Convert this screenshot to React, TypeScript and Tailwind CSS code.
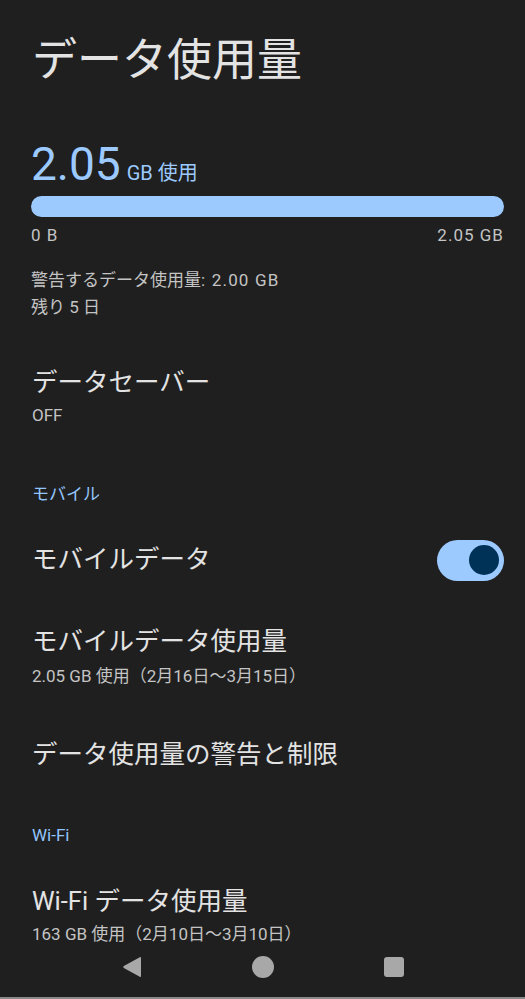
import React from 'react';

const font = { fontFamily: 'Roboto, "Noto Sans CJK JP", sans-serif' };

function SectionHeader({ label }: { label: string }) {
	return <div className="px-[32px] text-[17px] text-[#93c5fd] leading-none">{label}</div>;
}

function Item({ title, summary, gap = 'mt-[14px]' }: { title: string; summary?: string; gap?: string }) {
	return (
		<div className="px-[32px]">
			<div className="text-[25.5px] leading-none text-[#e3e3e3]">{title}</div>
			{summary && <div className={`${gap} text-[17px] leading-none text-[#c4c4c4]`}>{summary}</div>}
		</div>
	);
}

export default function App() {
	return (
		<div className="fixed inset-0 overflow-hidden bg-[#1f1f1f]" style={font}>
			<div className="pt-[38px]">
				<h1 className="px-[32px] text-[45px] leading-none text-[#e3e3e3]">データ使用量</h1>

				{/* usage summary */}
				<div className="mt-[58px] pl-[31px] pr-[21px]">
					<div className="flex items-baseline text-[#9ccaff]">
						<span className="text-[46px] leading-none">2.05</span>
						<span className="ml-[6px] text-[20px] leading-none">GB 使用</span>
					</div>
					<div className="mt-[9px] h-[21px] w-full rounded-full bg-[#9ccaff]" />
					<div className="mt-[10px] flex justify-between text-[17px] leading-none text-[#c4c4c4] tracking-[0.06em]">
						<span>0 B</span>
						<span>2.05 GB</span>
					</div>
					<div className="mt-[23px] text-[17px] leading-[27px] text-[#c4c4c4]">
						<div>
							警告するデータ使用量<span className="tracking-[0.07em]">: 2.00 GB</span>
						</div>
						<div>残り 5 日</div>
					</div>
				</div>

				<div className="mt-[49px]">
					<Item title="データセーバー" summary="OFF" gap="mt-[11px]" />
				</div>

				<div className="mt-[62px]">
					<SectionHeader label="モバイル" />
				</div>

				<div className="mt-[37px] flex items-center justify-between pl-[32px] pr-[21px]">
					<div className="text-[25.5px] leading-none text-[#e3e3e3]">モバイルデータ</div>
					<div className="flex h-[41px] w-[67px] items-center justify-end rounded-full bg-[#9ccaff] pr-[5px]">
						<div className="h-[30px] w-[30px] rounded-full bg-[#003258]" />
					</div>
				</div>

				<div className="mt-[48px]">
					<Item title="モバイルデータ使用量" summary="2.05 GB 使用（2月16日〜3月15日）" />
				</div>

				<div className="mt-[57px]">
					<Item title="データ使用量の警告と制限" />
				</div>

				<div className="mt-[59px]">
					<SectionHeader label="Wi-Fi" />
				</div>

				<div className="mt-[45px]">
					<Item title="Wi-Fi データ使用量" summary="163 GB 使用（2月10日〜3月10日）" gap="mt-[12px]" />
				</div>
			</div>

			{/* navigation bar */}
			<div className="absolute bottom-0 left-0 right-0 flex h-[54px] items-center justify-center gap-[110px] bg-gradient-to-b from-[#1f1f1f]/60 to-[#1f1f1f] pb-[10px]">
				<svg width="20" height="22" viewBox="0 0 20 22">
					<path d="M19 2 L19 20 Q19 21.5 17.8 20.8 L1.8 12 Q0.6 11 1.8 10 L17.8 1.2 Q19 0.5 19 2 Z" fill="#a8a8a8" />
				</svg>
				<div className="h-[22px] w-[22px] rounded-full bg-[#a8a8a8]" />
				<div className="h-[20px] w-[20px] rounded-[3px] bg-[#a8a8a8]" />
			</div>
			<div className="absolute bottom-0 left-0 right-0 h-[2px] bg-[#8a8a8a]" />
		</div>
	);
}
